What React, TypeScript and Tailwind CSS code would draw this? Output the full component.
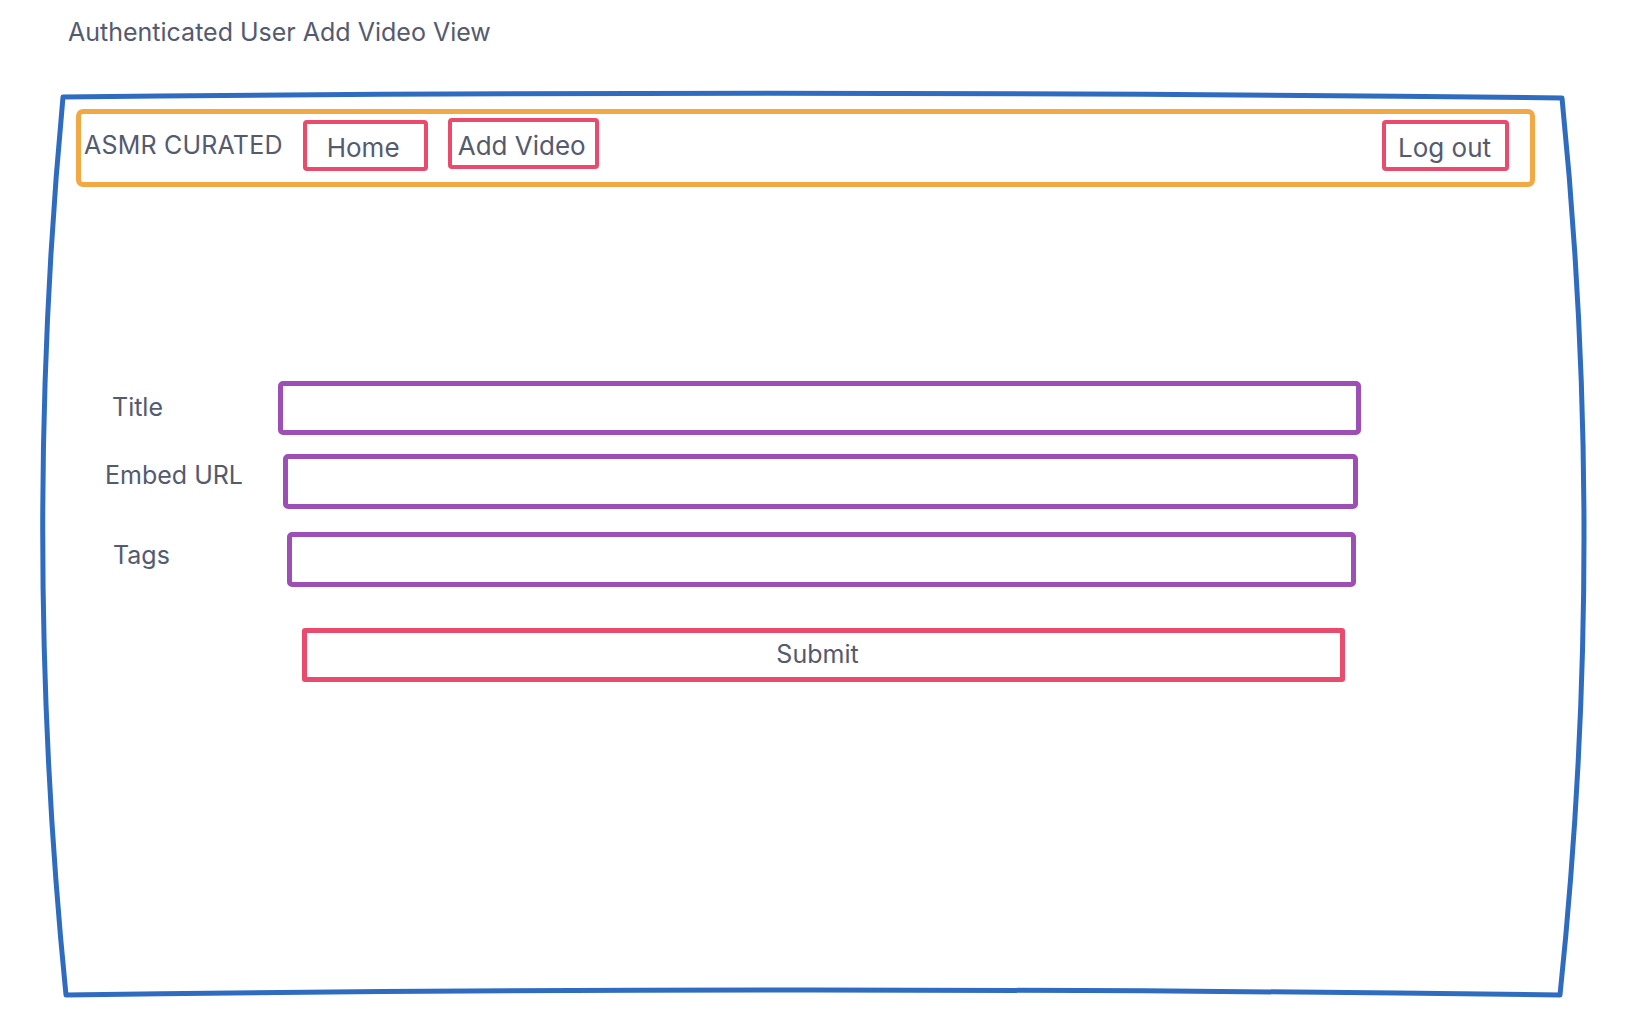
const rows = [
  {
    label: "Title",
    labelClass: "w-[173px] pl-[7px]",
    boxClass: "w-[1083px] h-[54px]",
    rowClass: "",
  },
  {
    label: "Embed URL",
    labelClass: "w-[178px] -mt-[12px]",
    boxClass: "w-[1075px] h-[55px]",
    rowClass: "mt-[19px]",
  },
  {
    label: "Tags",
    labelClass: "w-[182px] pl-[8px] -mt-[8px]",
    boxClass: "w-[1069px] h-[55px]",
    rowClass: "mt-[23px]",
  },
];

const NavBox = ({ label, className }: { label: string; className: string }) => (
  <a
    href="#"
    className={
      "flex shrink-0 items-center pt-[3px] h-[51px] border-[4.5px] border-[#ea4a6b] rounded-[4px] " + className
    }
  >
    {label}
  </a>
);

const App = () => {
  return (
    <div className="w-full h-[1020px] bg-white text-[#545a70] font-['Inter','Liberation_Sans',sans-serif]">
      <p className="pl-[68px] pt-[16px] text-[25px] leading-[32px]">
        Authenticated User Add Video View
      </p>

      <div className="relative ml-[40px] mt-[36px] w-[1548px] h-[916px]">
        {/* hand-drawn browser frame */}
        <svg
          className="absolute inset-0 w-full h-full overflow-visible pointer-events-none"
          viewBox="0 0 1548 916"
          preserveAspectRatio="none"
          aria-hidden="true"
        >
          <path
            d="M23 13 Q772 5 1522 14 Q1567 461 1520 911 Q772 901 26 911 Q-19 461 23 13 Z"
            fill="none"
            stroke="#2f6cc0"
            strokeWidth="5"
            strokeLinejoin="round"
          />
        </svg>

        <div className="relative flex flex-col pt-[25px] pl-[36px]">
          <nav className="flex items-start w-[1459px] h-[78px] pl-[3px] pr-[21px] pt-[6px] border-[5px] border-[#f2a945] rounded-[7px] text-[26px]">
            <span className="h-[50px] flex items-center pt-[2px] text-[25px] tracking-[0.2px]">
              ASMR CURATED
            </span>
            <NavBox label="Home" className="ml-[20px] w-[125px] pl-[20px]" />
            <NavBox label="Add Video" className="ml-[20px] -mt-[2px] w-[151px] pl-[6px]" />
            <NavBox label="Log out" className="ml-auto w-[127px] pl-[12px]" />
          </nav>

          <form className="flex flex-col mt-[194px] ml-[29px] text-[25px]">
            {rows.map((row) => (
              <div key={row.label} className={"flex items-center " + row.rowClass}>
                <label className={row.labelClass}>{row.label}</label>
                <div className={"border-[5px] border-[#9d4fb6] rounded-[5px] " + row.boxClass} />
              </div>
            ))}
            <button
              type="button"
              className="mt-[41px] ml-[197px] w-[1043px] h-[54px] pr-[12px] border-[5px] border-[#ea4a6b] rounded-[3px] text-[25px] text-[#545a70]"
            >
              Submit
            </button>
          </form>
        </div>
      </div>
    </div>
  );
};

export default App;
